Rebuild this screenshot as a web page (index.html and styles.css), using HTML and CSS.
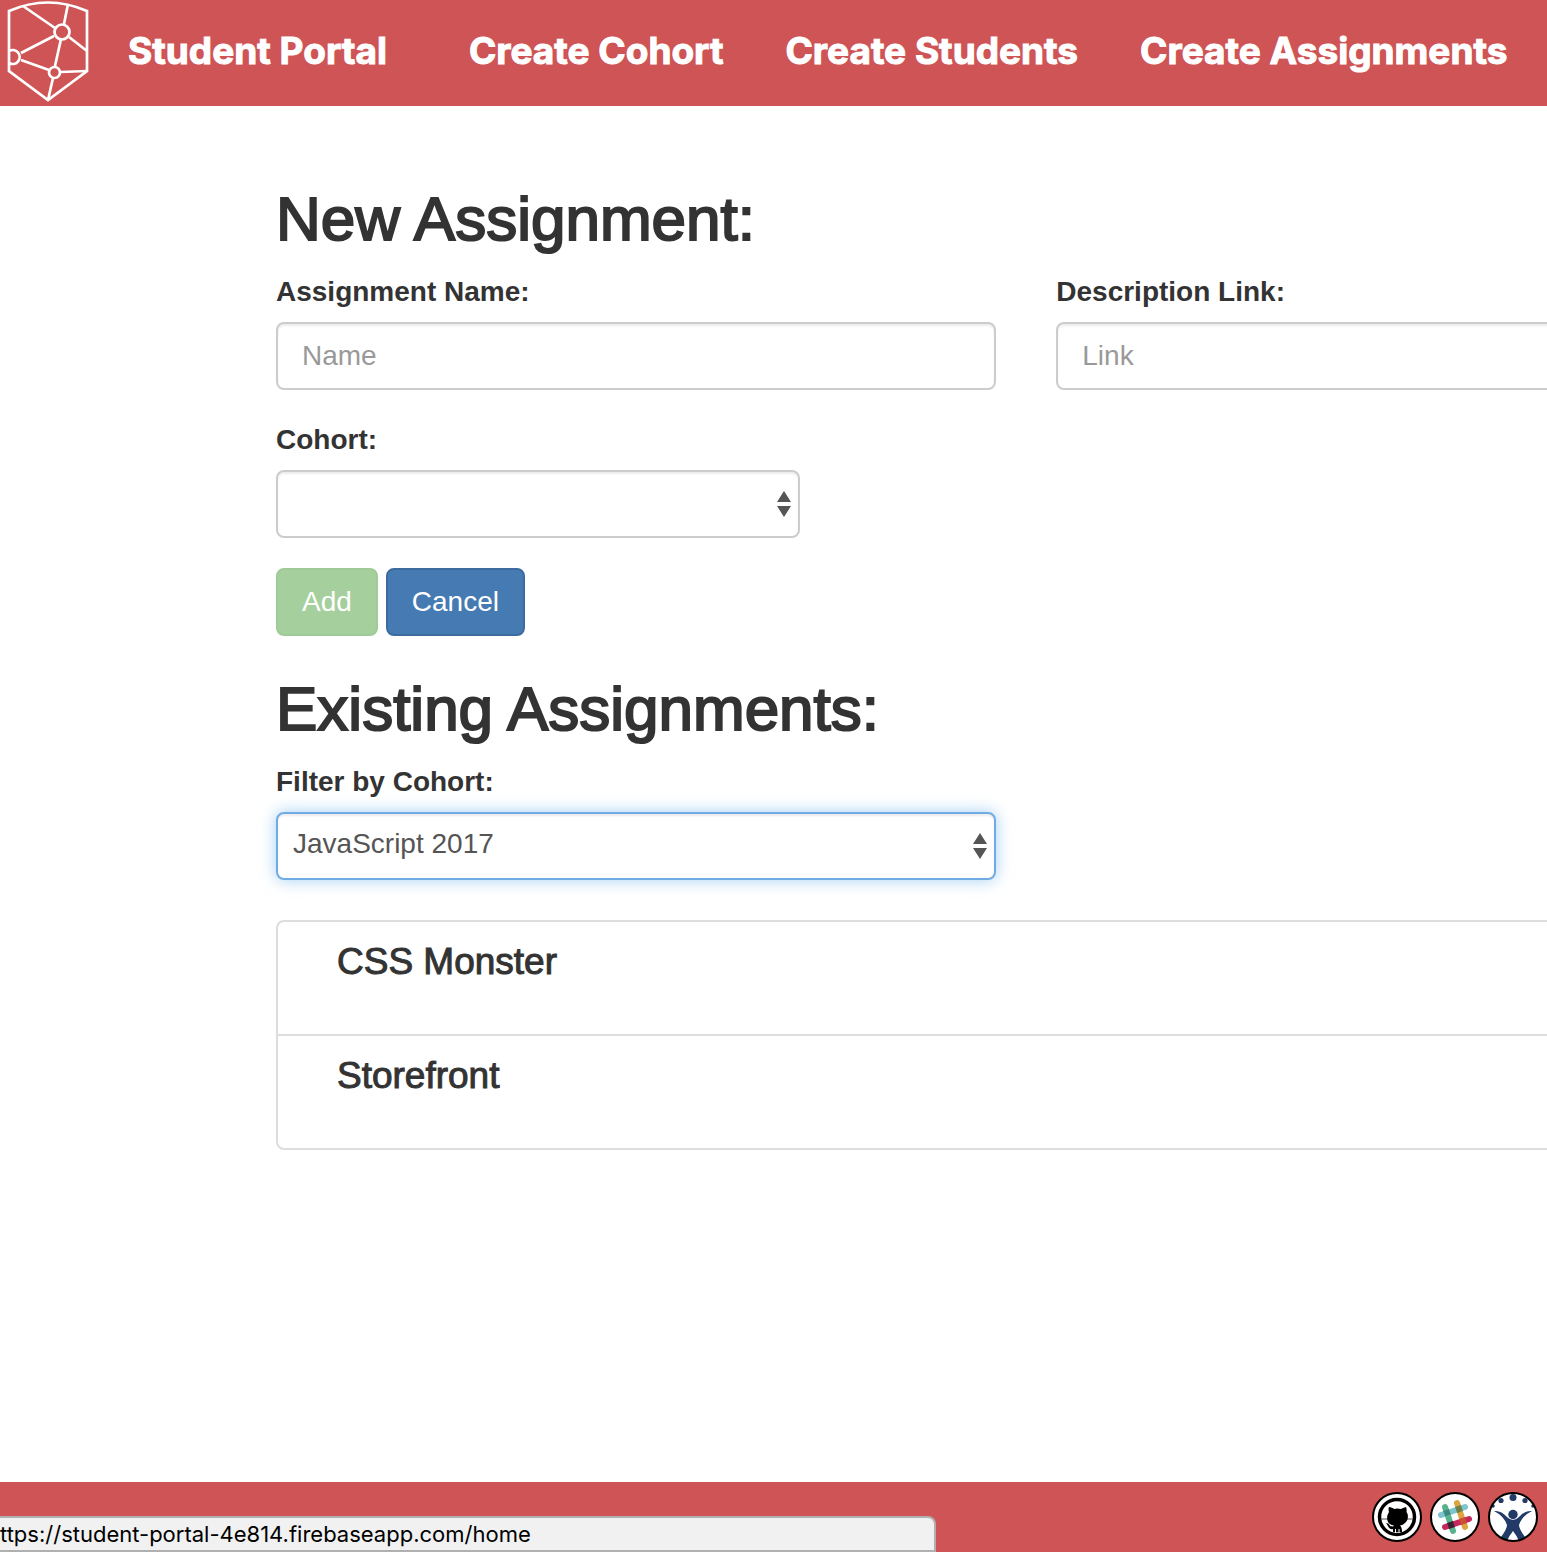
FILE: index.html
```html
<!DOCTYPE html>
<html lang="en">
<head>
<meta charset="utf-8">
<meta name="viewport" content="width=device-width, initial-scale=1">
<title>Student Portal</title>
<link rel="stylesheet" href="styles.css">
</head>
<body>
<header class="navbar">
  <svg class="logo" viewBox="0 0 82 102" fill="none" stroke="#fff" stroke-width="2.700" aria-hidden="true">
    <path d="M2 11Q41-6 80 11V71L41 100 2 71Z"/>
    <path d="M16 6L48 28M61 4L57 24M62 37L80 51M47 36L14 53M54 39L48 66M14 60L42 70M54 72L80 71M46 78L41 100M2 51a7 7 0 1 1 0 12"/>
    <circle cx="55" cy="32" r="7.500"/>
    <circle cx="47.500" cy="72.500" r="5.500"/>
  </svg>
  <nav class="nav">
    <a class="brand" href="#home">Student Portal</a>
    <a class="nav-link" href="#cohort">Create Cohort</a>
    <a class="nav-link" href="#students">Create Students</a>
    <a class="nav-link" href="#assignments">Create Assignments</a>
  </nav>
</header>
<main class="content">
  <section class="section">
    <h1 class="title">New Assignment:</h1>
    <form class="form">
      <div class="row">
        <div class="field">
          <label class="label" for="name">Assignment Name:</label>
          <input class="control" id="name" type="text" placeholder="Name">
        </div>
        <div class="field">
          <label class="label" for="link">Description Link:</label>
          <input class="control" id="link" type="text" placeholder="Link">
        </div>
      </div>
      <div class="row">
        <div class="field cohort">
          <label class="label" for="cohort">Cohort:</label>
          <div class="select-wrap">
            <select class="control select" id="cohort"><option></option></select>
            <svg class="arrows" viewBox="0 0 14 26" fill="#555" aria-hidden="true"><path d="M7 0L14 11H0ZM7 26L0 15H14Z"/></svg>
          </div>
        </div>
      </div>
      <div class="actions">
        <button class="btn btn-add" type="submit" disabled>Add</button>
        <button class="btn btn-cancel" type="button">Cancel</button>
      </div>
    </form>
  </section>
  <section class="section">
    <h2 class="title">Existing Assignments:</h2>
    <div class="row">
      <div class="field">
        <label class="label" for="filter">Filter by Cohort:</label>
        <div class="select-wrap">
          <select class="control select select-active" id="filter"><option>JavaScript 2017</option></select>
          <svg class="arrows" viewBox="0 0 14 26" fill="#555" aria-hidden="true"><path d="M7 0L14 11H0ZM7 26L0 15H14Z"/></svg>
        </div>
      </div>
    </div>
    <ul class="list">
      <li class="item"><h3 class="item-title">CSS Monster</h3></li>
      <li class="item"><h3 class="item-title">Storefront</h3></li>
    </ul>
  </section>
</main>
<footer class="footer">
  <a class="badge" href="#github" aria-label="GitHub">
    <svg viewBox="0 0 50 50">
      <circle cx="25" cy="25" r="24" fill="#fff" stroke="#000" stroke-width="2"/>
      <circle cx="25" cy="25" r="17.500" fill="#fff" stroke="#000" stroke-width="3.500"/>
      <path d="M10 27H17M33 27H40" stroke="#555" stroke-width="1"/>
      <path d="M17 15C19 15 21 16 22 17Q25 16 29 17C31 16 33 15 34 15Q35 17 34.500 20C37 23 36 29 33 31Q31 33 28 33.500Q30 35 30 40H21V37C17 38 17 35 14 31Q17 31 18 34L21 34.500L22 33.500C17 33 14 29 15.500 23L17 20Q16 17 17 15Z"/>
      <path d="M23.500 37V41M27 37V41" stroke="#fff" stroke-width="1"/>
    </svg>
  </a>
  <a class="badge" href="#slack" aria-label="Slack">
    <svg viewBox="0 0 50 50">
      <circle cx="25" cy="25" r="24" fill="#fff" stroke="#000" stroke-width="2"/>
      <g stroke-width="6" stroke-linecap="round">
        <path d="M15 15L23 39" stroke="#56b38b"/>
        <path d="M27 11L35 35" stroke="#dda43f"/>
        <path d="M11 23L35 15" stroke="#7ec5cf"/>
        <path d="M15 35L39 27" stroke="#c5295b"/>
      </g>
      <g stroke-width="6">
        <path d="M16 18L18 23.500" stroke="#3d8b79"/>
        <path d="M28 14L30 20" stroke="#718046"/>
        <path d="M20 30L22 36" stroke="#382236"/>
        <path d="M32 26L34 32" stroke="#cd5034"/>
      </g>
    </svg>
  </a>
  <a class="badge" href="#jira" aria-label="Jira">
    <svg viewBox="0 0 50 50">
      <defs><clipPath id="disc"><circle cx="25" cy="25" r="24"/></clipPath></defs>
      <circle cx="25" cy="25" r="24" fill="#fff"/>
      <g fill="#213a68" clip-path="url(#disc)">
        <circle cx="25" cy="5.500" r="3.500"/><circle cx="13" cy="8.500" r="2.600"/><circle cx="37" cy="8.500" r="2.600"/>
        <circle cx="5" cy="14" r="1.800"/><circle cx="45" cy="14" r="1.800"/><circle cx="25" cy="22.500" r="4.700"/>
        <path d="M6 19Q13 18 19 25Q22 28 25 28T31 25Q37 18 44 19Q34 24 31 33Q31 37 37 45L31 49Q29 44 25 39Q21 44 19 49L13 45Q19 37 19 33Q16 24 6 19Z"/>
      </g>
      <circle cx="25" cy="25" r="24" fill="none" stroke="#000" stroke-width="2"/>
    </svg>
  </a>
</footer>
<div class="status">ttps://student-portal-4e814.firebaseapp.com/home</div>
</body>
</html>
```
FILE: styles.css
```css
* { box-sizing: border-box; }

body {
  margin: 0;
  min-height: 100vh;
  display: flex;
  flex-direction: column;
  overflow-x: hidden;
  background: #fff;
  color: #333;
  font: 28px/40px "Liberation Sans", Arial, sans-serif;
}

.navbar {
  display: flex;
  align-items: flex-start;
  height: 106px;
  padding-left: 7px;
  background: #cf5455;
}

.logo { width: 82px; height: 102px; flex: none; }

.nav { display: flex; align-items: center; height: 102px; padding-left: 8px; }

.nav a {
  padding: 0 31px;
  color: #fff;
  font: 700 37px/40px Inter, sans-serif;
  -webkit-text-stroke: 1px #fff;
  text-decoration: none;
  white-space: nowrap;
}

.nav .brand { margin-right: 20px; }

.content { flex: 1; padding: 80px 0 40px 276px; }

.section { width: 97vw; margin-bottom: 40px; }

.title {
  margin: 0 0 20px;
  font-size: 62px;
  line-height: 66px;
  font-weight: 400;
  -webkit-text-stroke: 2px #333;
}

.row {
  display: grid;
  grid-template-columns: 1fr 1fr;
  gap: 60px;
  margin-bottom: 30px;
}

.label { display: block; margin-bottom: 10px; font-weight: 700; }

.control {
  display: block;
  width: 100%;
  height: 68px;
  padding: 12px 24px;
  border: 2px solid #ccc;
  border-radius: 8px;
  background: #fff;
  box-shadow: inset 0 2px 2px rgba(0, 0, 0, 0.075);
  color: #555;
  font: inherit;
}

.control::placeholder { color: #999; opacity: 1; }

.cohort { width: 524px; }

.select-wrap { position: relative; }

.select { appearance: none; padding: 8px 15px 12px; }

.select-active {
  border-color: #71abe3;
  box-shadow: inset 0 2px 2px rgba(0, 0, 0, 0.075), 0 0 16px rgba(102, 175, 233, 0.6);
}

.arrows {
  position: absolute;
  top: 21px;
  right: 9px;
  width: 14px;
  height: 26px;
  pointer-events: none;
}

.actions { display: flex; gap: 8px; }

.btn {
  height: 68px;
  padding: 12px 24px;
  border: 2px solid;
  border-radius: 8px;
  color: #fff;
  font: inherit;
}

.btn-add { border-color: #a0ca97; background: #a5cf9c; }

.btn-cancel { border-color: #3e6b9f; background: #467ab2; }

.list {
  margin: 40px 0 0;
  padding: 0;
  list-style: none;
  border: 2px solid #ddd;
  border-radius: 8px;
}

.item { height: 112px; padding: 20px 59px; }

.item + .item { height: 114px; border-top: 2px solid #ddd; }

.item-title {
  margin: 0;
  font-size: 37px;
  line-height: 40px;
  font-weight: 400;
  -webkit-text-stroke: 1px #333;
}

.footer {
  display: flex;
  justify-content: flex-end;
  align-items: center;
  gap: 8px;
  height: 70px;
  padding-right: 9px;
  background: #cf5455;
}

.badge, .badge svg { display: block; width: 50px; height: 50px; }

.status {
  position: fixed;
  left: 0;
  bottom: 0;
  width: 936px;
  height: 36px;
  border: 2px solid #b0b0b0;
  border-left: 0;
  border-radius: 0 8px 0 0;
  background: #f1f1f1;
  color: #000;
  font: 22px/32px Inter, sans-serif;
}
```
